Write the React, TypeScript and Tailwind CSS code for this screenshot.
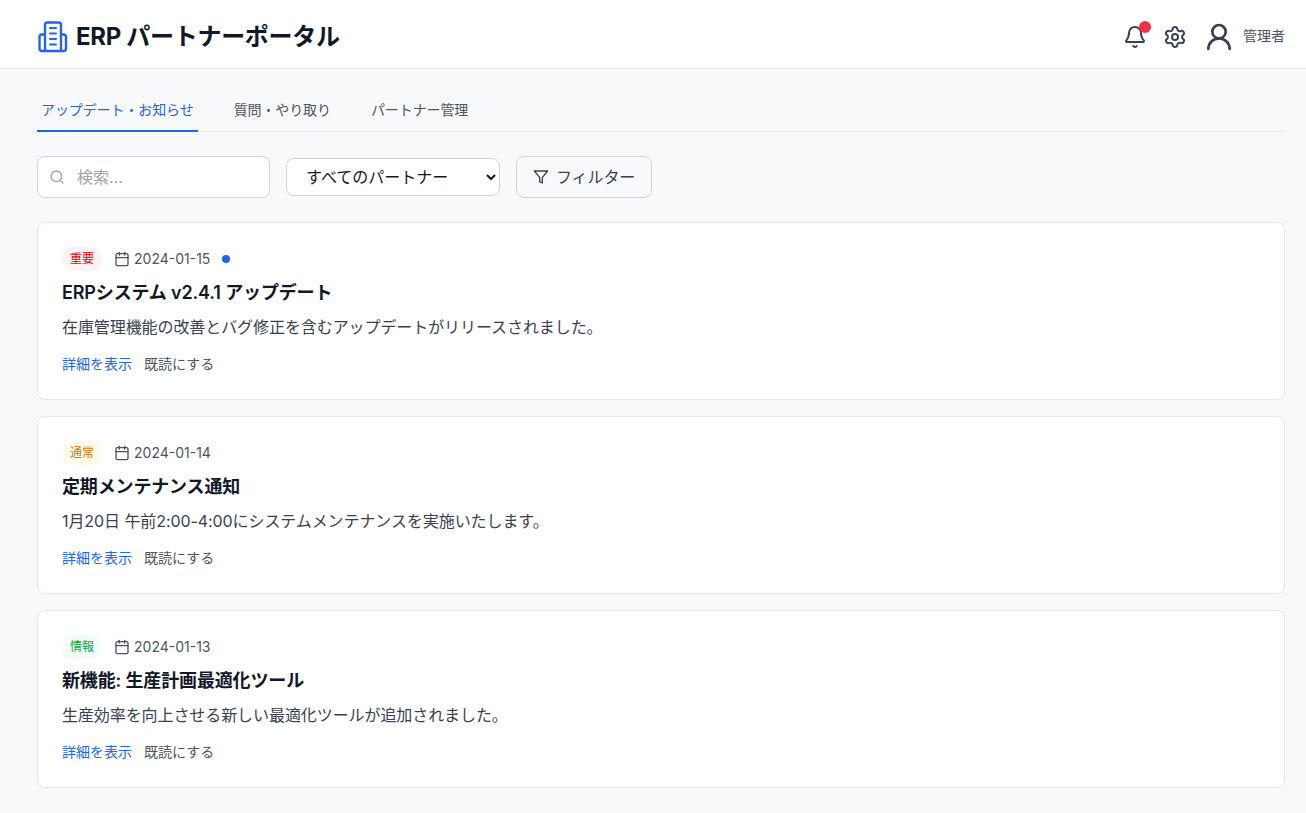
import { Bell, Calendar, Search, Settings, UserRound } from "lucide-react";

const items = [
  { tag: "重要", tagCls: "bg-red-50 text-red-600", date: "2024-01-15", dot: true, title: "ERPシステム v2.4.1 アップデート", body: "在庫管理機能の改善とバグ修正を含むアップデートがリリースされました。" },
  { tag: "通常", tagCls: "bg-yellow-50 text-[#d97706]", date: "2024-01-14", dot: false, title: "定期メンテナンス通知", body: "1月20日 午前2:00-4:00にシステムメンテナンスを実施いたします。" },
  { tag: "情報", tagCls: "bg-green-50 text-green-600", date: "2024-01-13", dot: false, title: "新機能: 生産計画最適化ツール", body: "生産効率を向上させる新しい最適化ツールが追加されました。" },
];

function Logo() {
  return (
    <svg width="32" height="32" viewBox="0 0 32 32" fill="none" stroke="#2563eb" strokeWidth="2.4" strokeLinecap="round" strokeLinejoin="round">
      <path d="M8 30V4a2.500 2.500 0 0 1 2.500-2.500h11A2.500 2.500 0 0 1 24 4v26" />
      <path d="M8 13.500H5A2.500 2.500 0 0 0 2.500 16v11.500A2.500 2.500 0 0 0 5 30h21.500a2.500 2.500 0 0 0 2.500-2.500V16a2.500 2.500 0 0 0-2.500-2.500H24" />
      <path d="M13 7h6M13 12.500h6M13 18h6M13 23.500h6" strokeWidth="2" />
    </svg>
  );
}

function FunnelIcon() {
  return (
    <svg width="16" height="16" viewBox="0 0 24 24" fill="none" stroke="currentColor" strokeWidth="2" strokeLinecap="round" strokeLinejoin="round">
      <polygon points="22 3 2 3 10 12.46 10 19 14 21 14 12.46 22 3" />
    </svg>
  );
}

export default function App() {
  return (
    <div className="min-h-[813px] bg-[#f8f9fb] font-['Inter','Noto_Sans_CJK_JP',sans-serif] text-[#111827]">
      <header className="flex h-[69px] items-center justify-between border-b border-[#e5e7eb] bg-white pl-[37px] pr-[21px] pt-[5px]">
        <div className="flex items-center gap-[7px]">
          <Logo />
          <h1 className="text-2xl font-bold tracking-[-0.3px]">ERP パートナーポータル</h1>
        </div>
        <div className="flex items-center gap-4 text-[#374151]">
          <div className="relative">
            <Bell className="h-6 w-6" />
            <span className="absolute right-[-4px] top-[-4px] h-3 w-3 rounded-full bg-[#ef3340]" />
          </div>
          <Settings className="h-6 w-6" />
          <div className="flex items-center gap-2">
            <UserRound className="h-8 w-8" />
            <span className="-mt-[2px] text-sm text-[#4b5563]">管理者</span>
          </div>
        </div>
      </header>
      <main className="pl-[37px] pr-[21px] pt-6">
        <nav className="flex gap-8 border-b border-[#e5e7eb] tracking-[-0.1px]">
          <button className="-mb-px border-b-2 border-[#2563eb] px-1 pb-[10px] pt-[7px] text-sm text-[#2563eb]">アップデート・お知らせ</button>
          <button className="-mb-px border-b-2 border-transparent px-1 pb-[10px] pt-[7px] text-sm text-[#4b5563]">質問・やり取り</button>
          <button className="-mb-px border-b-2 border-transparent px-1 pb-[10px] pt-[7px] text-sm text-[#4b5563]">パートナー管理</button>
        </nav>
        <div className="mt-6 flex items-center gap-4">
          <div className="relative w-[233px]">
            <Search className="absolute left-3 top-[13px] h-4 w-4 text-[#9ca3af]" />
            <input placeholder="検索..." className="h-[42px] w-full rounded-lg border border-[#d1d5db] bg-white pl-[39px] pr-4 text-base placeholder:text-[#9ca3af]" />
          </div>
          <select className="h-[38px] w-[214px] rounded-lg border border-[#d1d5db] bg-white px-[15px] text-base text-[#111827]">
            <option>すべてのパートナー</option>
          </select>
          <button className="flex h-[42px] items-center gap-[7px] rounded-lg border border-[#d1d5db] px-4 text-base tracking-[-0.1px] text-[#374151]">
            <FunnelIcon />
            フィルター
          </button>
        </div>
        <div className="mt-6 flex flex-col gap-4">
          {items.map((it) => (
            <article key={it.date} className="h-[178px] rounded-lg border border-[#e5e7eb] bg-white p-6">
              <div className="flex h-6 items-center gap-3">
                <span className={`rounded-full px-2 py-1 text-xs leading-4 ${it.tagCls}`}>{it.tag}</span>
                <span className="flex items-center gap-1 text-sm text-[#4b5563]">
                  <Calendar className="h-4 w-4" />
                  {it.date}
                </span>
                {it.dot && <span className="h-2 w-2 rounded-full bg-[#2563eb]" />}
              </div>
              <h2 className="mt-2 text-lg font-semibold leading-7 tracking-[-0.15px]">{it.title}</h2>
              <p className="mt-2 text-base leading-6 tracking-[-0.08px] text-[#374151]">{it.body}</p>
              <div className="mt-[15px] flex gap-3 text-sm leading-5">
                <button className="text-[#2563eb]">詳細を表示</button>
                <button className="text-[#4b5563]">既読にする</button>
              </div>
            </article>
          ))}
        </div>
      </main>
    </div>
  );
}
